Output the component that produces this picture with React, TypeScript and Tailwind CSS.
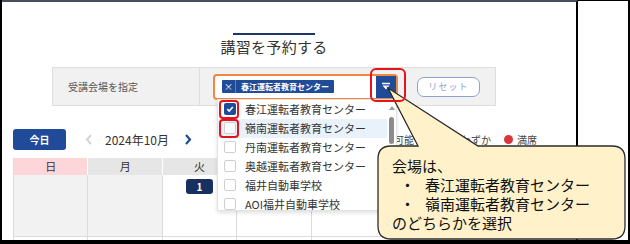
import React from 'react';

// ─── Data ──────────────────────────────────────────────────
const venues = [
  '春江運転者教育センター',
  '嶺南運転者教育センター',
  '丹南運転者教育センター',
  '奥越運転者教育センター',
  '福井自動車学校',
  'AOI福井自動車学校',
];

const weekdays = ['日', '月', '火', '水', '木', '金', '土'];

// ─── Dropdown list ─────────────────────────────────────────
function VenueDropdown() {
  return (
    <div className="absolute left-[2px] top-full mt-[1px] w-[180px] h-[112px] overflow-hidden bg-white border border-[#e3e3e3] shadow-[0_2px_4px_rgba(0,0,0,0.12)] z-10 flex">
      <div className="flex-1">
        {venues.map((v, i) => (
          <div
            key={v}
            className={`h-[19px] flex items-center pl-[6px] gap-[9px] ${i === 1 ? 'bg-[#e9f1fb]' : ''}`}
          >
            <span
              className={`w-[12px] h-[12px] shrink-0 rounded-[2px] flex items-center justify-center ${
                i === 0 ? 'bg-[#1f4b99]' : 'bg-white border border-[#cfcfcf]'
              }`}
            >
              {i === 0 && (
                <svg width="8" height="8" viewBox="0 0 8 8">
                  <path d="M1.3 4.2 L3.2 6 L6.8 2" fill="none" stroke="white" strokeWidth="1.6" />
                </svg>
              )}
            </span>
            <span className="text-[11px] leading-none text-[#333] whitespace-nowrap">{v}</span>
          </div>
        ))}
      </div>
      {/* scrollbar */}
      <div className="w-[9px] flex flex-col items-center pt-[6px]">
        <div className="w-0 h-0 border-l-[3px] border-r-[3px] border-b-[4px] border-l-transparent border-r-transparent border-b-[#9a9a9a]" />
        <div className="mt-[7px] w-[5px] h-[27px] rounded-full bg-[#8c8c8c]" />
      </div>
    </div>
  );
}

// ─── Venue select ──────────────────────────────────────────
function VenueSelect() {
  return (
    <div className="relative w-[185px] h-[26px] rounded-[4px] border-2 border-[#f0893f] bg-white flex items-center pl-[7px]">
      <div className="h-[13px] flex items-center bg-[#1f4b99] rounded-[1px]">
        <span className="w-[13px] text-center text-white text-[9px] leading-none">×</span>
        <span className="w-px h-full bg-[#5d7dbb]" />
        <span className="px-[5px] text-white text-[8px] font-bold leading-none whitespace-nowrap">
          春江運転者教育センター
        </span>
      </div>
      <div className="ml-auto w-[20px] h-full bg-[#1f4b99] flex items-center justify-center">
        <svg width="10" height="9" viewBox="0 0 10 9">
          <path d="M1 1.5 H9" stroke="white" strokeWidth="1.5" />
          <path d="M1.5 3.5 L5 7.5 L8.5 3.5 Z" fill="white" />
        </svg>
      </div>
      <VenueDropdown />
    </div>
  );
}

// ─── Legend ────────────────────────────────────────────────
function Legend() {
  return (
    <div className="flex items-center gap-[13px] text-[10px] leading-none text-[#444] -mr-[2px]">
      <span className="flex items-center gap-[4px]">
        <span className="w-[9px] h-[9px] rounded-full border-2 border-[#3a9a5b]" />
        予約可能
      </span>
      <span className="flex items-center gap-[4px]">
        <span className="w-0 h-0 border-l-[5px] border-r-[5px] border-b-[9px] border-l-transparent border-r-transparent border-b-[#f0a030]" />
        残りわずか
      </span>
      <span className="flex items-center gap-[4px]">
        <span className="w-[9px] h-[9px] rounded-full bg-[#d8373d]" />
        満席
      </span>
    </div>
  );
}

// ─── Calendar ──────────────────────────────────────────────
function Calendar() {
  return (
    <div className="mt-[8px] border-l border-[#dcdcdc]">
      <div className="grid grid-cols-7 h-[17px]">
        {weekdays.map((d, i) => (
          <div
            key={d}
            className={`flex items-center justify-center text-[11px] leading-none text-[#333] border-r border-white ${
              i === 0 ? 'bg-[#fcd6d9]' : 'bg-[#e6e6e6]'
            }`}
          >
            {d}
          </div>
        ))}
      </div>
      {[0, 1].map((row) => (
        <div key={row} className="grid grid-cols-7 h-[62px] border-b border-[#dcdcdc]">
          {weekdays.map((d, i) => (
            <div
              key={d}
              className={`border-r border-[#dcdcdc] flex justify-center pt-[4px] ${
                row === 0 && i < 2 ? 'bg-[#f2f2f2]' : 'bg-white'
              }`}
            >
              {row === 0 && i === 2 && (
                <span className="w-[27px] h-[15px] rounded-[3px] bg-[#17305f] text-white text-[10px] font-bold leading-[15px] text-center">
                  1
                </span>
              )}
            </div>
          ))}
        </div>
      ))}
    </div>
  );
}

// ─── Page ──────────────────────────────────────────────────
export default function App() {
  return (
    <div className="relative w-[630px] h-[244px] overflow-hidden bg-white font-['Noto_Sans_CJK_JP','Noto_Sans',sans-serif]">
      <div className="h-full flex border-l-2 border-r-2 border-b-4 border-black">
        {/* screenshot panel */}
        <div className="w-[576px] h-full border-t-2 border-t-[#474e5c] border-r-2 border-r-black overflow-hidden">
          <div className="ml-[11px] w-[522px]">
            <div className="h-[31px]" />
            <div className="mx-auto w-[82px] h-[2px] bg-[#1c3668]" />
            <h1 className="mt-[2px] h-[20px] text-center text-[15px] leading-[20px] tracking-[0.02em] text-[#333]">
              講習を予約する
            </h1>

            {/* filter row */}
            <div className="mt-[10px] mx-auto w-[444px] h-[39px] flex bg-[#f1f1f1] border border-[#dedede]">
              <div className="w-[147px] flex items-center pl-[15px] border-r border-[#dedede] text-[10px] leading-none text-[#555]">
                受講会場を指定
              </div>
              <div className="flex-1 flex items-center pl-[13px] gap-[19px]">
                <VenueSelect />
                <button className="w-[63px] h-[20px] rounded-[7px] border border-[#8fa2cf] bg-white text-[9px] leading-none tracking-[0.12em] text-[#8fa2cf]">
                  リセット
                </button>
              </div>
            </div>

            {/* month controls */}
            <div className="mt-[23px] h-[21px] flex items-center justify-between">
              <div className="flex items-center">
                <button className="w-[53px] h-[21px] rounded-[3px] bg-[#1f4b99] text-white text-[10px] font-bold leading-none">
                  今日
                </button>
                <svg className="ml-[19px]" width="8" height="11" viewBox="0 0 8 11">
                  <path d="M6 1 L2 5.5 L6 10" fill="none" stroke="#d4d4d4" strokeWidth="2" />
                </svg>
                <span className="ml-[12px] text-[12px] leading-none text-[#333]">2024年10月</span>
                <svg className="ml-[15px]" width="8" height="11" viewBox="0 0 8 11">
                  <path d="M2 1 L6 5.5 L2 10" fill="none" stroke="#1f4b99" strokeWidth="2.2" />
                </svg>
              </div>
              <Legend />
            </div>

            <Calendar />
          </div>
        </div>
        <div className="flex-1 border-t border-black" />
      </div>

      {/* callout */}
      <svg className="absolute left-0 top-0 pointer-events-none z-20" width="630" height="244" viewBox="0 0 630 244">
        <path
          d="M391 146 L418 146 L388 88 L478 146 L612 146 Q625 146 625 159 L625 226 Q625 239 612 239 L391 239 Q378 239 378 226 L378 159 Q378 146 391 146 Z"
          fill="#fff1c9"
          stroke="#2b2b2b"
          strokeWidth="1.3"
        />
      </svg>
      <div className="absolute left-[392px] top-[156px] z-30 text-[15px] leading-[19px] text-[#111] whitespace-nowrap">
        <div>会場は、</div>
        <div className="pl-[8px] flex">
          <span>・</span>
          <span className="ml-[10px]">春江運転者教育センター</span>
        </div>
        <div className="pl-[8px] flex">
          <span>・</span>
          <span className="ml-[10px]">嶺南運転者教育センター</span>
        </div>
        <div>のどちらかを選択</div>
      </div>

      {/* red highlights */}
      <div className="absolute left-[370px] top-[68px] w-[36px] h-[34px] rounded-[6px] border-[2.5px] border-[#e5141c] z-30" />
      <div className="absolute left-[219px] top-[100px] w-[20px] h-[19px] rounded-[4px] border-[2.5px] border-[#e5141c] z-30" />
      <div className="absolute left-[219px] top-[119px] w-[20px] h-[19px] rounded-[4px] border-[2.5px] border-[#e5141c] z-30" />
    </div>
  );
}
